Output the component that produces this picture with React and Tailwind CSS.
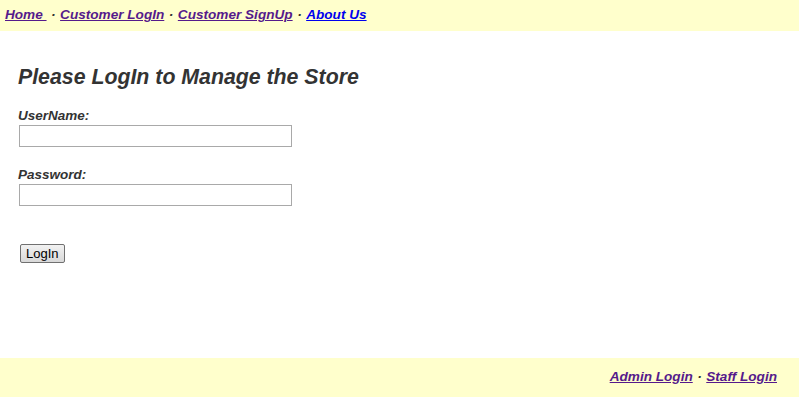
import React from 'react';

export default function App() {
  const font = { fontFamily: '"Liberation Sans", Arial, sans-serif' };

  return (
    <div className="w-[799px] h-[405px] bg-white flex flex-col text-[#333]" style={font}>
      {/* Top nav */}
      <div className="h-[31px] bg-[#ffffcc] flex items-center px-[5px] text-[13.6px] font-bold italic">
        <a href="#" className="underline text-[#551a8b]">Home&nbsp;</a>
        <span className="mx-[4.5px] text-[#333]">·</span>
        <a href="#" className="underline text-[#551a8b]">Customer LogIn</a>
        <span className="mx-[4.5px] text-[#333]">·</span>
        <a href="#" className="underline text-[#551a8b]">Customer SignUp</a>
        <span className="mx-[4.5px] text-[#333]">·</span>
        <a href="#" className="underline text-[#0000ee]">About Us</a>
      </div>

      {/* Login form */}
      <div className="flex-1 pl-[18px] pt-[34px]">
        <h1 className="text-[21.3px] leading-[24px] font-bold italic text-[#333]">Please LogIn to Manage the Store</h1>
        <div className="mt-[19px] text-[13.5px] leading-[16px] font-bold italic">UserName:</div>
        <input type="text" className="mt-[1px] ml-[1px] block w-[273px] h-[22px] border border-[#a9a9a9] bg-white" />
        <div className="mt-[20px] text-[13.5px] leading-[16px] font-bold italic">Password:</div>
        <input type="password" className="mt-[1px] ml-[1px] block w-[273px] h-[22px] border border-[#a9a9a9] bg-white" />
        <button className="mt-[38px] ml-[2px] h-[19px] px-[5px] text-[13px] leading-[15px] text-black border border-[#707070] rounded-[2px] bg-gradient-to-b from-[#f2f2f2] to-[#d8d8d8]">
          LogIn
        </button>
      </div>

      {/* Footer */}
      <div className="h-[39px] bg-[#ffffcc] flex items-center justify-end pr-[22px] text-[13.6px] font-bold italic mb-[8px]">
        <a href="#" className="underline text-[#551a8b]">Admin Login</a>
        <span className="mx-[4.5px] text-[#333]">·</span>
        <a href="#" className="underline text-[#551a8b]">Staff Login</a>
      </div>
    </div>
  );
}
